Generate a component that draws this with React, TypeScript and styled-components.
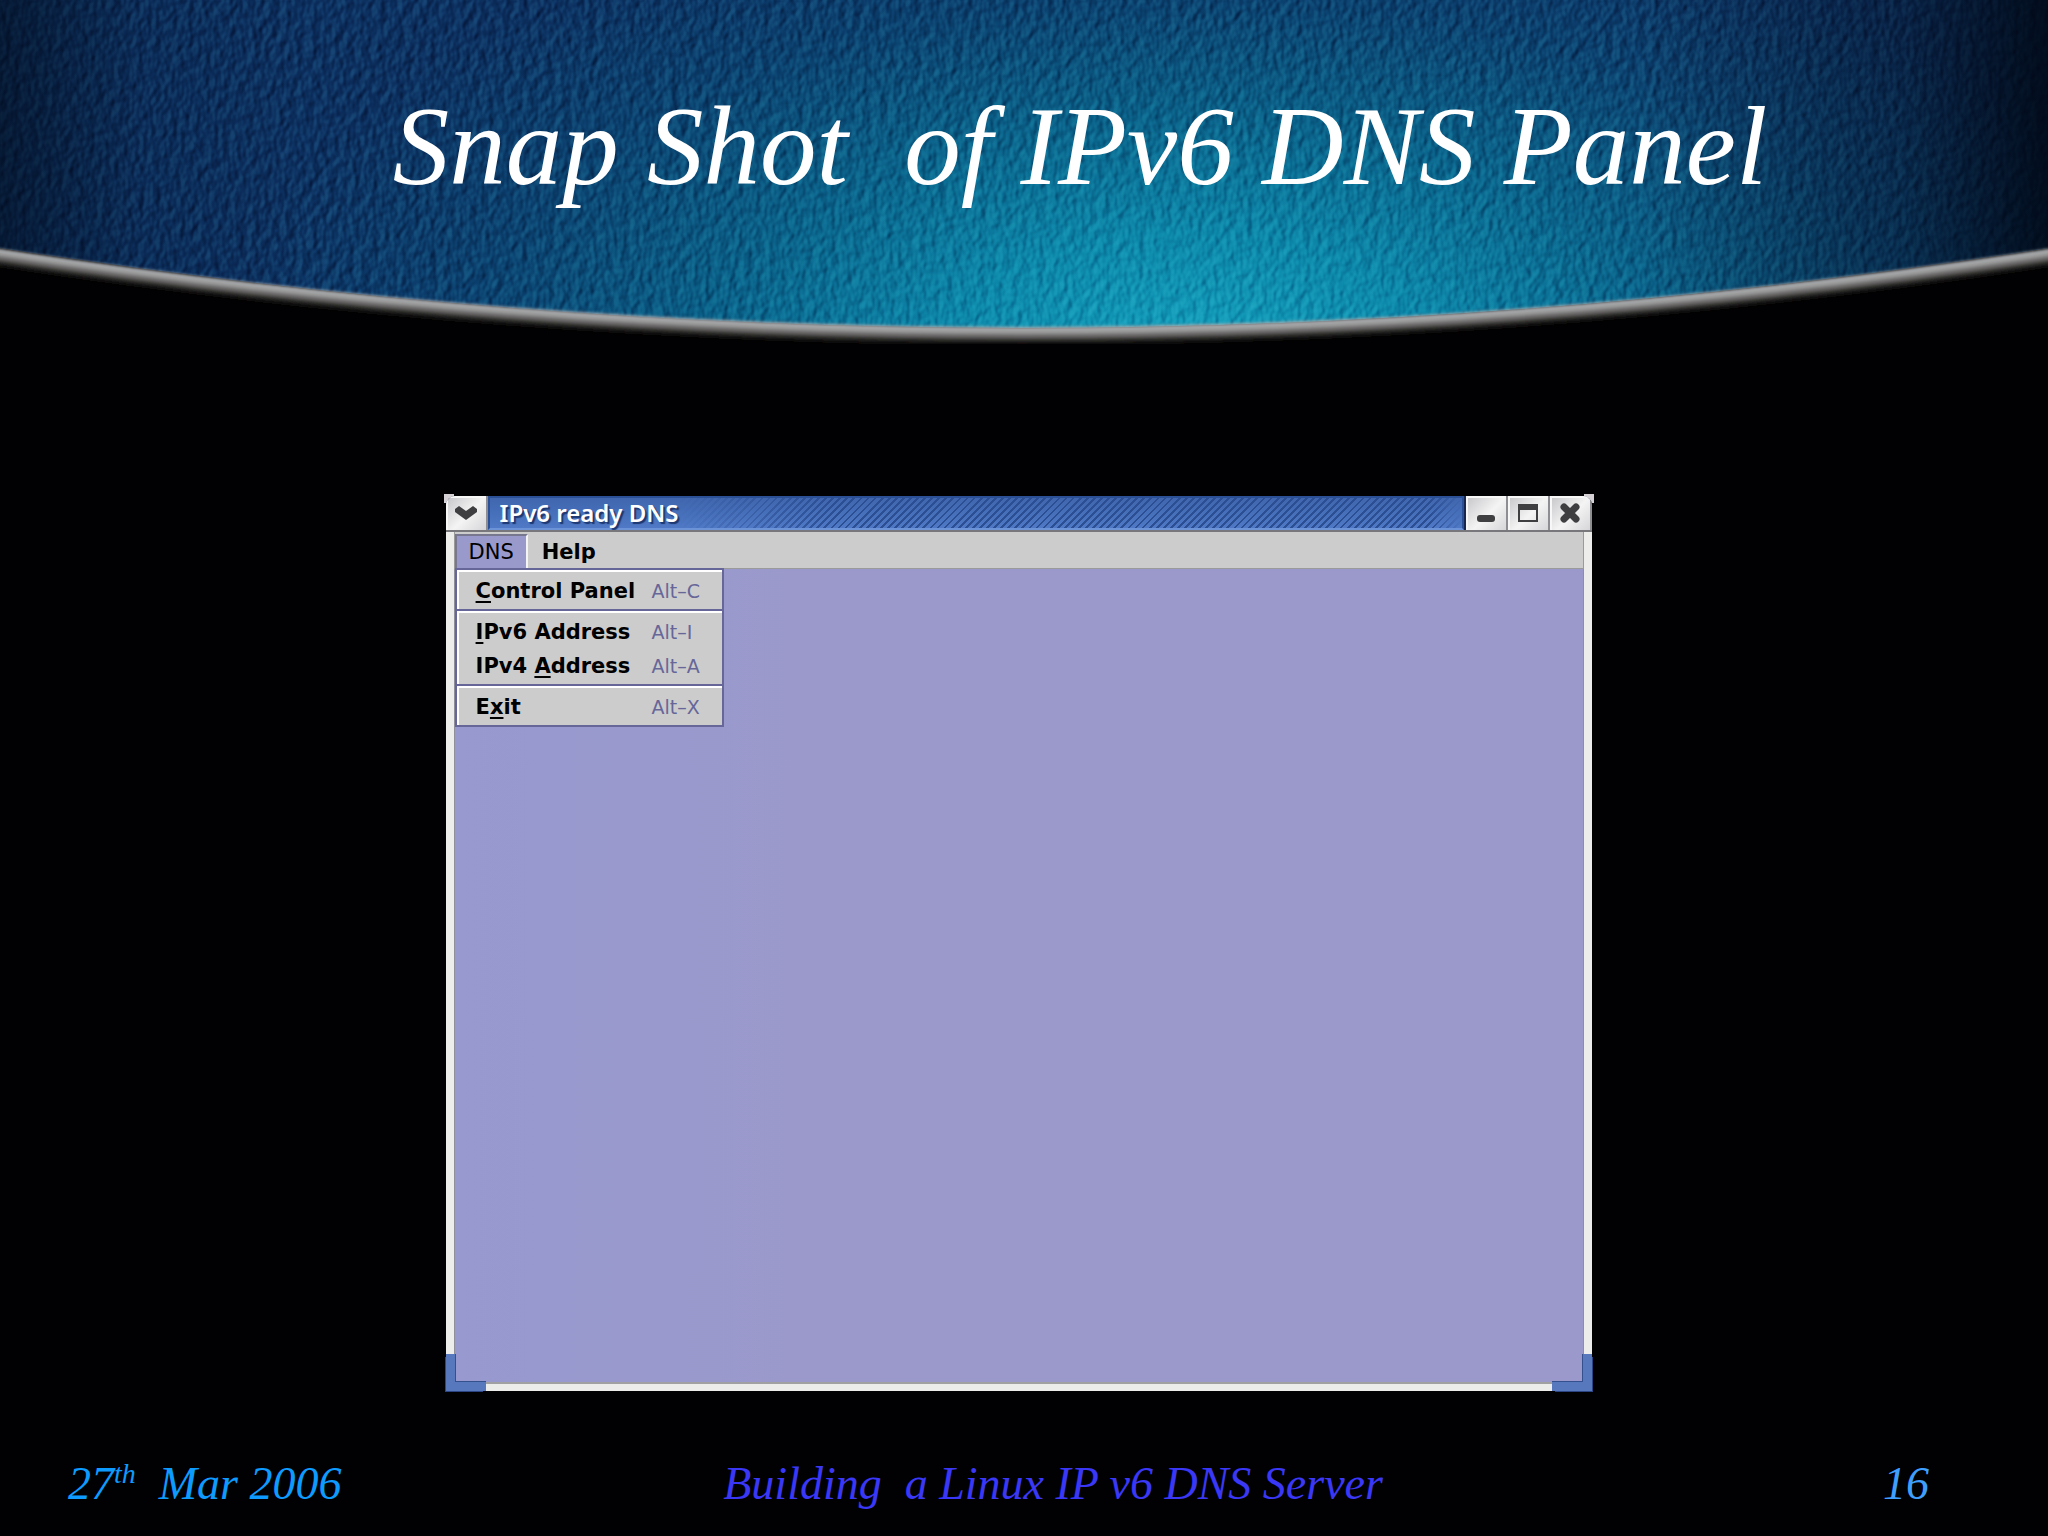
import React from "react";
import styled, { createGlobalStyle } from "styled-components";

const GlobalStyle = createGlobalStyle`
  *, *::before, *::after { box-sizing: border-box; }
  body { margin: 0; background: #010103; }
  button { margin: 0; font: inherit; color: inherit; cursor: pointer; }
`;

const Slide = styled.div`
  min-height: 100vh;
  display: flex;
  flex-direction: column;
  background: #010103;
  font-family: "Liberation Serif", serif;
  font-style: italic;
`;

const Banner = styled.header`
  display: grid;
  height: 344px;
`;

const BannerArt = styled.svg`
  grid-area: 1 / 1;
  width: 100%;
  height: 344px;
  display: block;
`;

const Title = styled.h1`
  grid-area: 1 / 1;
  margin: 0;
  padding: 80px 0 0 112px;
  text-align: center;
  font-size: 113px;
  line-height: 132px;
  font-weight: 400;
  color: #fff;
  white-space: pre;
  z-index: 1;
`;

const Stage = styled.main`
  flex: 1;
  display: flex;
  justify-content: center;
  align-items: flex-start;
  padding: 152px 10px 40px 0;
`;

const AppWindow = styled.section`
  position: relative;
  z-index: 0;
  width: 56vw;
  display: flex;
  flex-direction: column;
  font-family: "DejaVu Sans", sans-serif;
  font-style: normal;
  font-size: 21px;
  line-height: 28px;

  /* light nubs behind the rounded top corners */
  &::before,
  &::after {
    content: "";
    position: absolute;
    z-index: -1;
    top: -2px;
    width: 10px;
    height: 9px;
    background: #d4d0d4;
  }
  &::before { left: -2px; }
  &::after { right: -2px; }
`;

const TitleBar = styled.div`
  display: flex;
  height: 36px;
  border-bottom: 2px solid #77777c;
  border-radius: 9px 9px 0 0;
  overflow: hidden;
  background: #16264f;
`;

const FrameButton = styled.button`
  width: 42px;
  padding: 0;
  display: grid;
  place-items: center;
  border: solid #8d8d92;
  border-width: 0 2px 0 0;
  background: linear-gradient(135deg, #c4c4c8, #f4f4f4 55%, #d6d6d9);
  box-shadow: inset 2px 2px 0 #f7f7f7;
`;

const Caption = styled.div`
  flex: 1;
  margin-right: 2px;
  display: flex;
  align-items: center;
  padding-left: 10px;
  border: 2px solid #2c5096;
  border-bottom-color: #6c92d8;
  background: linear-gradient(#3f66ae, #4f79c6);
  color: #fff;
  font-family: "Noto Sans", sans-serif;
  font-weight: 600;
  font-size: 24px;
  text-shadow: 2px 2px 1px #1d376f;
`;

const Hatch = styled.span`
  flex: 1;
  align-self: stretch;
  background: repeating-linear-gradient(135deg, transparent 0 3px, #2c4f94 3px 5px);
  mask-image: linear-gradient(90deg, transparent, #000 20%, #000 96%, transparent);
`;

const Frame = styled.div`
  border: solid #ededeb;
  border-width: 0 8px;
`;

const MenuBar = styled.nav`
  display: flex;
  height: 37px;
  padding-top: 2px;
  background: #cccccc;
  border: solid #9a9a9a;
  border-width: 0 1px 1px;
`;

const MenuHolder = styled.div`
  position: relative;
  display: flex;
`;

const MenuButton = styled.button<{ $open?: boolean }>`
  padding: 0 12px;
  border: solid ${(p) => (p.$open ? "#777790" : "#cccccc")};
  border-width: 2px 2px 0;
  border-right-color: ${(p) => (p.$open ? "#f4f4f4" : "#cccccc")};
  background: ${(p) => (p.$open ? "#9999cc" : "#cccccc")};
  color: #000;
  font-weight: ${(p) => (p.$open ? 400 : 700)};
`;

const Popup = styled.div`
  position: absolute;
  top: 34px;
  left: 0;
  width: 269px;
  z-index: 2;
  border: 2px solid #666699;
  background: #666699;
  display: flex;
  flex-direction: column;
  gap: 2px;
`;

const Group = styled.div`
  background: #cccccc;
  border: solid #fff;
  border-width: 2px 0 0 2px;
  padding: 2px 0 1px;
`;

const Item = styled.button`
  width: 100%;
  height: 34px;
  padding: 0 0 0 17px;
  border: 0;
  background: transparent;
  color: #000;
  display: grid;
  grid-template-columns: 176px 1fr;
  align-items: center;
  text-align: left;
  font-weight: 700;
`;

const Mnemonic = styled.span`
  text-decoration: underline;
  text-decoration-thickness: 2px;
  text-underline-offset: 3px;
  text-decoration-skip-ink: none;
`;

const Shortcut = styled.span`
  font-weight: 400;
  font-size: 19px;
  color: #666699;
`;

const Canvas = styled.div`
  aspect-ratio: 1131 / 813;
  background: linear-gradient(90deg, #9799cf, #9b99cc 30%);
  border: solid #8f8f9c;
  border-width: 0 1px;
`;

const BottomEdge = styled.div`
  display: flex;
  justify-content: space-between;
  align-items: flex-end;
  height: 9px;
  background: #ececea;
  border-top: 2px solid #a0a0a2;
`;

const Grip = styled.span<{ $side: "left" | "right" }>`
  width: 40px;
  height: 37px;
  border: solid #5878bd;
  border-width: 0 0 9px;
  border-${(p) => p.$side}-width: 9px;
  box-shadow: inset ${(p) => (p.$side === "left" ? "1px" : "-1px")} -1px 0 #34508f,
    ${(p) => (p.$side === "left" ? "-2px" : "2px")} 2px 0 -1px #2b4585;
`;

const Footer = styled.footer`
  display: grid;
  grid-template-columns: 6fr auto 5fr;
  align-items: baseline;
  padding: 0 119px 26px 68px;
  font-size: 46px;
  line-height: 52px;
  white-space: pre;
`;

const DateText = styled.time`
  color: #0d9bff;
  sup { font-size: 28px; line-height: 0; }
`;
const Topic = styled.span`
  color: #3a38f6;
`;
const PageNumber = styled.span`
  color: #3f9fff;
  text-align: right;
`;

const entries = [
  [{ before: "", key: "C", after: "ontrol Panel", short: "Alt–C" }],
  [
    { before: "", key: "I", after: "Pv6 Address", short: "Alt–I" },
    { before: "IPv4 ", key: "A", after: "ddress", short: "Alt–A" },
  ],
  [{ before: "E", key: "x", after: "it", short: "Alt–X" }],
];

export default function App() {
  return (
    <Slide>
      <GlobalStyle />
      <Banner>
        <BannerArt viewBox="0 0 2048 344" preserveAspectRatio="none" aria-hidden="true">
          <defs>
            <radialGradient id="glow" gradientUnits="userSpaceOnUse" cx="0" cy="0" r="1" gradientTransform="translate(1190 350) scale(960 470)">
              <stop offset="0" stopColor="#139fbc" />
              <stop offset="0.25" stopColor="#0c86a8" />
              <stop offset="0.5" stopColor="#0a6088" />
              <stop offset="0.75" stopColor="#0b416f" />
              <stop offset="1" stopColor="#0c3060" />
            </radialGradient>
            <linearGradient id="sides">
              <stop offset="0" stopColor="#000611" stopOpacity="0.55" />
              <stop offset="0.07" stopColor="#000611" stopOpacity="0.1" />
              <stop offset="0.15" stopColor="#000611" stopOpacity="0" />
              <stop offset="0.8" stopColor="#000611" stopOpacity="0" />
              <stop offset="0.93" stopColor="#000611" stopOpacity="0.35" />
              <stop offset="1" stopColor="#000611" stopOpacity="0.85" />
            </linearGradient>
            <filter id="leather" x="0" y="0" width="100%" height="100%" colorInterpolationFilters="sRGB">
              <feTurbulence type="fractalNoise" baseFrequency="0.12 0.09" numOctaves="2" seed="7" result="noise" />
              <feDiffuseLighting in="noise" surfaceScale="2" diffuseConstant="0.72" lightingColor="#ffffff" result="light">
                <feDistantLight azimuth="205" elevation="45" />
              </feDiffuseLighting>
              <feBlend in="light" in2="SourceGraphic" mode="soft-light" />
              <feComposite operator="in" in2="SourceGraphic" />
            </filter>
            <filter id="soften" filterUnits="userSpaceOnUse" x="-20" y="200" width="2090" height="144">
              <feGaussianBlur stdDeviation="1.5" />
            </filter>
            <clipPath id="dome">
              <path d="M0 0H2048V248Q1024 408 0 248Z" />
            </clipPath>
          </defs>
          <g clipPath="url(#dome)">
            <rect width="2048" height="344" fill="url(#glow)" filter="url(#leather)" />
            <rect width="2048" height="344" fill="url(#sides)" />
          </g>
          <g fill="none" filter="url(#soften)">
            <path d="M-10 260Q1024 419 2058 260" stroke="#0e0d0c" strokeWidth="12" />
            <path d="M-10 257Q1024 416 2058 257" stroke="#33312f" strokeWidth="10" />
            <path d="M-10 254Q1024 413 2058 254" stroke="#6a6868" strokeWidth="9" />
            <path d="M-10 251Q1024 410 2058 251" stroke="#9a9a9a" strokeWidth="7" />
            <path d="M-10 249Q1024 408 2058 249" stroke="#aaadb0" strokeWidth="3" />
          </g>
        </BannerArt>
        <Title>{"Snap Shot  of IPv6 DNS Panel"}</Title>
      </Banner>
      <Stage>
        <AppWindow aria-label="IPv6 ready DNS">
          <TitleBar>
            <FrameButton aria-label="Window menu">
              <svg width="24" height="16" viewBox="0 0 24 16">
                <path d="M1 4L5 1L12 6L19 1L23 4V7L12 15L1 7Z" fill="#3f3f42" />
              </svg>
            </FrameButton>
            <Caption>
              IPv6 ready DNS
              <Hatch />
            </Caption>
            <FrameButton aria-label="Minimize">
              <svg width="20" height="24" viewBox="0 0 20 24">
                <rect x="1" y="14" width="18" height="7" rx="3" fill="#3f3f42" />
              </svg>
            </FrameButton>
            <FrameButton aria-label="Maximize">
              <svg width="20" height="20" viewBox="0 0 20 20">
                <rect x="1" y="2" width="18" height="16" fill="none" stroke="#3f3f42" strokeWidth="2" />
                <rect x="0" y="1" width="20" height="6" fill="#3f3f42" />
              </svg>
            </FrameButton>
            <FrameButton aria-label="Close">
              <svg width="20" height="20" viewBox="0 0 20 20">
                <path d="M4 4L16 16M16 4L4 16" stroke="#3f3f42" strokeWidth="7" strokeLinecap="round" />
              </svg>
            </FrameButton>
          </TitleBar>
          <Frame>
            <MenuBar>
              <MenuHolder>
                <MenuButton $open aria-haspopup="menu" aria-expanded="true">DNS</MenuButton>
                <Popup role="menu">
                  {entries.map((group, i) => (
                    <Group key={i}>
                      {group.map((e) => (
                        <Item key={e.short} role="menuitem">
                          <span>
                            {e.before}
                            <Mnemonic>{e.key}</Mnemonic>
                            {e.after}
                          </span>
                          <Shortcut>{e.short}</Shortcut>
                        </Item>
                      ))}
                    </Group>
                  ))}
                </Popup>
              </MenuHolder>
              <MenuButton aria-haspopup="menu">Help</MenuButton>
            </MenuBar>
            <Canvas />
          </Frame>
          <BottomEdge>
            <Grip $side="left" />
            <Grip $side="right" />
          </BottomEdge>
        </AppWindow>
      </Stage>
      <Footer>
        <DateText dateTime="2006-03-27">
          27<sup>th</sup>{"  Mar 2006"}
        </DateText>
        <Topic>{"Building  a Linux IP v6 DNS Server"}</Topic>
        <PageNumber>16</PageNumber>
      </Footer>
    </Slide>
  );
}
